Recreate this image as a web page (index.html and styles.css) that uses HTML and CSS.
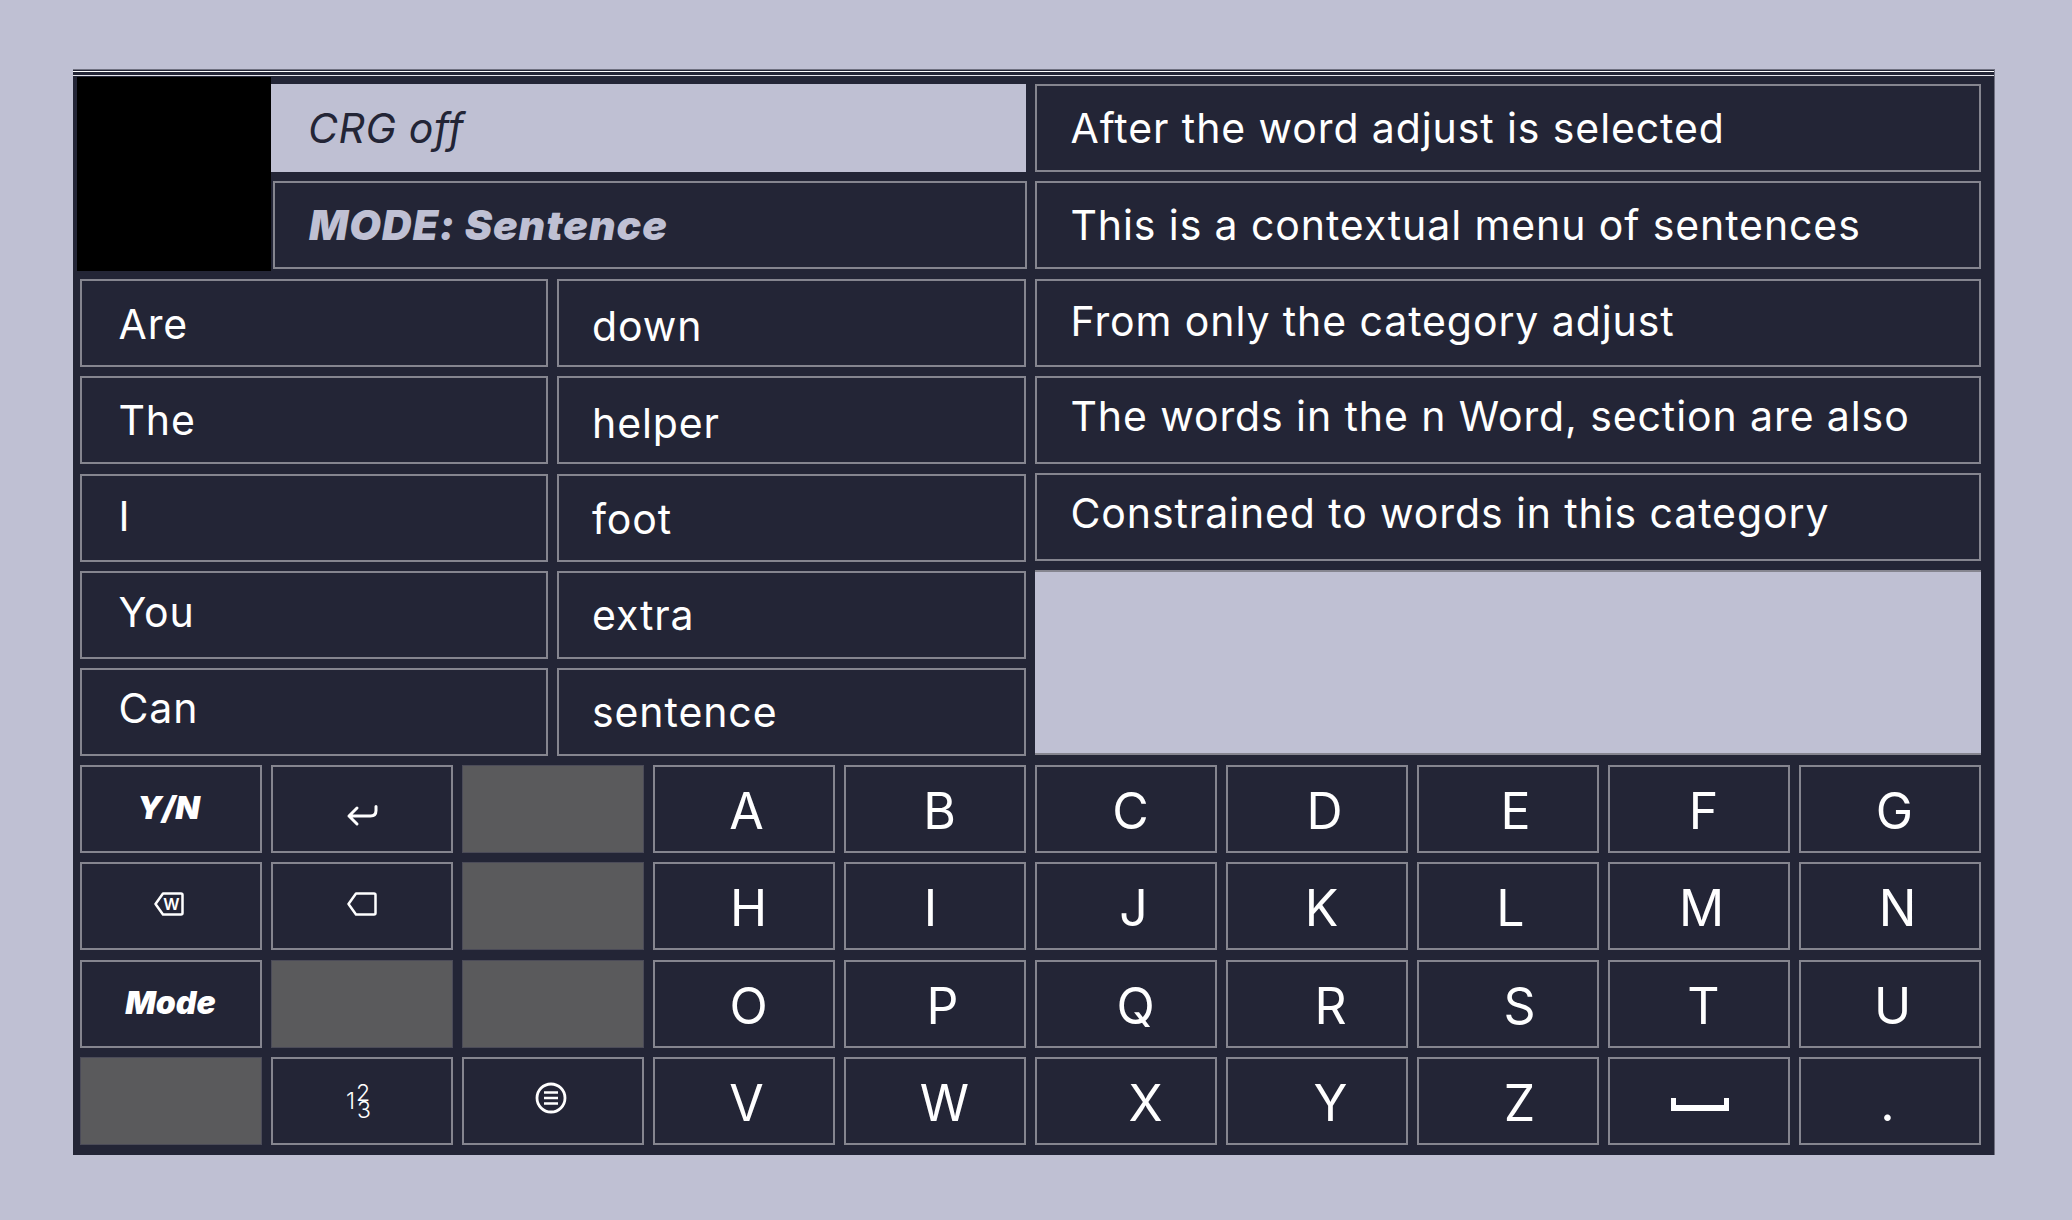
FILE: index.html
```html
<!DOCTYPE html>
<html lang="en">
<head>
    <meta charset="UTF-8">
    <title>Sentence Mode Keyboard</title>
    <link rel="stylesheet" href="styles.css">
</head>
<body>
    <div class="panel">
        <div class="topline"></div>
        <div class="upper">
            <div class="leftside">
                <div class="header">
                    <div class="logo"></div>
                    <div class="bars">
                        <div class="cell bar-light">CRG off</div>
                        <div class="cell bar-mode">MODE: Sentence</div>
                    </div>
                </div>
                <div class="words">
                    <div class="cell word dy-p1">Are</div>
                    <div class="cell word alt dy-p3">down</div>
                    <div class="cell word">The</div>
                    <div class="cell word alt dy-p3">helper</div>
                    <div class="cell word dy-m2">I</div>
                    <div class="cell word alt dy-p1">foot</div>
                    <div class="cell word dy-m3">You</div>
                    <div class="cell word alt">extra</div>
                    <div class="cell word dy-m4">Can</div>
                    <div class="cell word alt">sentence</div>
                </div>
            </div>
            <div class="rightside">
                <div class="cell line">After the word adjust is selected</div>
                <div class="cell line">This is a contextual menu of sentences</div>
                <div class="cell line dy-m2">From only the category adjust</div>
                <div class="cell line dy-m4">The words in the n Word, section are also</div>
                <div class="cell line dy-m4">Constrained to words in this category</div>
                <div class="blank"></div>
            </div>
        </div>
        <div class="keys">
            <div class="cell key label l2">Y/N</div>
            <div class="cell key">
                <svg class="icon enter" width="32" height="22" viewBox="0 0 32 22"><path d="M30 1.500v4q0 5.500-5.500 5.500H3M11 3l-8 8 8 8" fill="none" stroke="#fff" stroke-width="3" stroke-linecap="round" stroke-linejoin="round"/></svg>
            </div>
            <div class="key off"></div>
            <div class="cell key letter r3">A</div>
            <div class="cell key letter r5">B</div>
            <div class="cell key letter r5">C</div>
            <div class="cell key letter r8">D</div>
            <div class="cell key letter r8">E</div>
            <div class="cell key letter r5">F</div>
            <div class="cell key letter r5">G</div>

            <div class="cell key">
                <svg class="icon back word-back" width="30" height="24" viewBox="0 0 30 24"><path d="M9 1.500h18q1.500 0 1.500 1.500v18q0 1.500-1.500 1.500H9L1.500 12z" fill="none" stroke="#fff" stroke-width="2.500" stroke-linejoin="round"/><text x="17.500" y="18" class="icon-w">W</text></svg>
            </div>
            <div class="cell key">
                <svg class="icon back" width="30" height="24" viewBox="0 0 30 24"><path d="M9 1.500h18q1.500 0 1.500 1.500v18q0 1.500-1.500 1.500H9L1.500 12z" fill="none" stroke="#fff" stroke-width="2.500" stroke-linejoin="round"/></svg>
            </div>
            <div class="key off"></div>
            <div class="cell key letter r5">H</div>
            <div class="cell key letter l4">I</div>
            <div class="cell key letter r8">J</div>
            <div class="cell key letter r5">K</div>
            <div class="cell key letter r3">L</div>
            <div class="cell key letter r3">M</div>
            <div class="cell key letter r8">N</div>

            <div class="cell key label">Mode</div>
            <div class="key off"></div>
            <div class="key off"></div>
            <div class="cell key letter r5">O</div>
            <div class="cell key letter r8">P</div>
            <div class="cell key letter r10">Q</div>
            <div class="cell key letter r14">R</div>
            <div class="cell key letter r12">S</div>
            <div class="cell key letter r5">T</div>
            <div class="cell key letter r3">U</div>

            <div class="key off"></div>
            <div class="cell key">
                <svg class="icon nums" width="30" height="50" viewBox="0 0 30 50"><text x="0" y="33">1</text><text x="10" y="25">2</text><text x="11" y="41.500">3</text></svg>
            </div>
            <div class="cell key">
                <svg class="icon menu" width="32" height="32" viewBox="0 0 32 32"><circle cx="16" cy="16" r="14" fill="none" stroke="#fff" stroke-width="2.800"/><path d="M9 10.500h14M9 16h14M9 21.500h14" stroke="#fff" stroke-width="2.500"/></svg>
            </div>
            <div class="cell key letter r3">V</div>
            <div class="cell key letter r10">W</div>
            <div class="cell key letter r20">X</div>
            <div class="cell key letter r14">Y</div>
            <div class="cell key letter r12">Z</div>
            <div class="cell key">
                <svg class="icon space" width="58" height="13" viewBox="0 0 58 13"><path d="M0 0h5v7h48V0h5v13H0z" fill="#fff"/></svg>
            </div>
            <div class="cell key letter l2">.</div>
        </div>
    </div>
</body>
</html>
```

FILE: styles.css
```css
* {
    margin: 0;
    padding: 0;
    box-sizing: border-box;
}

body {
    background-color: #bfc0d3;
    font-family: "Inter", "Liberation Sans", sans-serif;
    height: 1220px;
    overflow: hidden;
    padding: 69px 77px 0 73px;
    color: #fff;
}

.panel {
    width: 1922px;
    height: 1086px;
    background-color: #232536;
    border-top: 1px solid #6f7080;
    border-right: 1px solid #6f7080;
    padding: 0 13.500px 0 6.500px;
}

.topline {
    height: 5px;
    margin: 1px -13px 8px -6.500px;
    border-top: 1px solid #fff;
    border-bottom: 1px solid #e4e4ea;
}

.upper {
    display: grid;
    grid-template-columns: 1fr 1fr;
    column-gap: 9px;
}

.cell {
    background-color: #232536;
    border: 2px solid #85858f;
    height: 88px;
    display: flex;
    align-items: center;
    font-size: 41px;
    letter-spacing: 0.900px;
}

/* left half */
.header {
    display: flex;
    height: 185px;
    margin-bottom: 10px;
}

.logo {
    width: 194px;
    height: 194px;
    margin: -7px 0 0 -2.500px;
    background-color: #000;
    flex-shrink: 0;
}

.bars {
    flex: 1;
    display: flex;
    flex-direction: column;
    gap: 9px;
}

.bar-light {
    background-color: #bfc0d3;
    border: none;
    color: #232536;
    font-style: italic;
    letter-spacing: 0.600px;
    padding-left: 37px;
}

.bar-mode {
    color: #bfc0d3;
    font-style: italic;
    font-weight: 900;
    letter-spacing: 1px;
    padding-left: 34px;
    margin: 0 -1.500px 0 2px;
}

.words {
    display: grid;
    grid-template-columns: 1fr 1fr;
    column-gap: 9px;
    row-gap: 9.250px;
}

.word {
    padding-left: 37px;
}

.word.alt {
    padding-left: 33px;
}

/* right half */
.rightside {
    display: flex;
    flex-direction: column;
    gap: 9.250px;
}

.line {
    padding-left: 34px;
}

.blank {
    flex: 1;
    margin-bottom: 1px;
    background-color: #bfc0d3;
    border-top: 2px solid #85858f;
    border-bottom: 2px solid #85858f;
}

/* text in these rows sits a little off the middle of the cell */
.dy-p3 { padding-top: 6px; }
.dy-p1 { padding-top: 2px; }
.dy-m2 { padding-bottom: 4px; }
.dy-m3 { padding-bottom: 6px; }
.dy-m4 { padding-bottom: 8px; }

/* keyboard */
.keys {
    display: grid;
    grid-template-columns: repeat(10, 1fr);
    grid-auto-rows: 88px;
    column-gap: 9px;
    row-gap: 9.250px;
    margin-top: 9px;
}

.key {
    justify-content: center;
}

.key.off {
    background-color: #5a5a5c;
    border: 1px solid #4b4b58;
}

.letter {
    font-size: 50px;
    letter-spacing: 0;
    padding-top: 4px;
}

.label {
    font-size: 32px;
    font-style: italic;
    font-weight: 900;
    letter-spacing: 0;
    padding-bottom: 3px;
}

/* horizontal nudges for the key captions */
.l2 { padding-right: 4px; }
.l4 { padding-right: 8px; }
.r3 { padding-left: 6px; }
.r5 { padding-left: 10px; }
.r8 { padding-left: 16px; }
.r10 { padding-left: 20px; }
.r12 { padding-left: 24px; }
.r14 { padding-left: 28px; }
.r20 { padding-left: 40px; }

.icon.enter { margin-top: 14px; }
.icon.back { margin-bottom: 4px; }
.icon.word-back { margin-right: 4px; }
.icon.menu { margin: 0 4px 6px 0; }
.icon.space { margin: 7px 0 0 2px; }
.icon.nums { margin-right: 2px; }

.icon-w {
    fill: #fff;
    font-size: 16px;
    font-weight: 600;
    letter-spacing: 0;
    text-anchor: middle;
}

.nums text {
    fill: #fff;
    font-size: 23px;
    font-weight: 300;
    letter-spacing: 0;
}
```
